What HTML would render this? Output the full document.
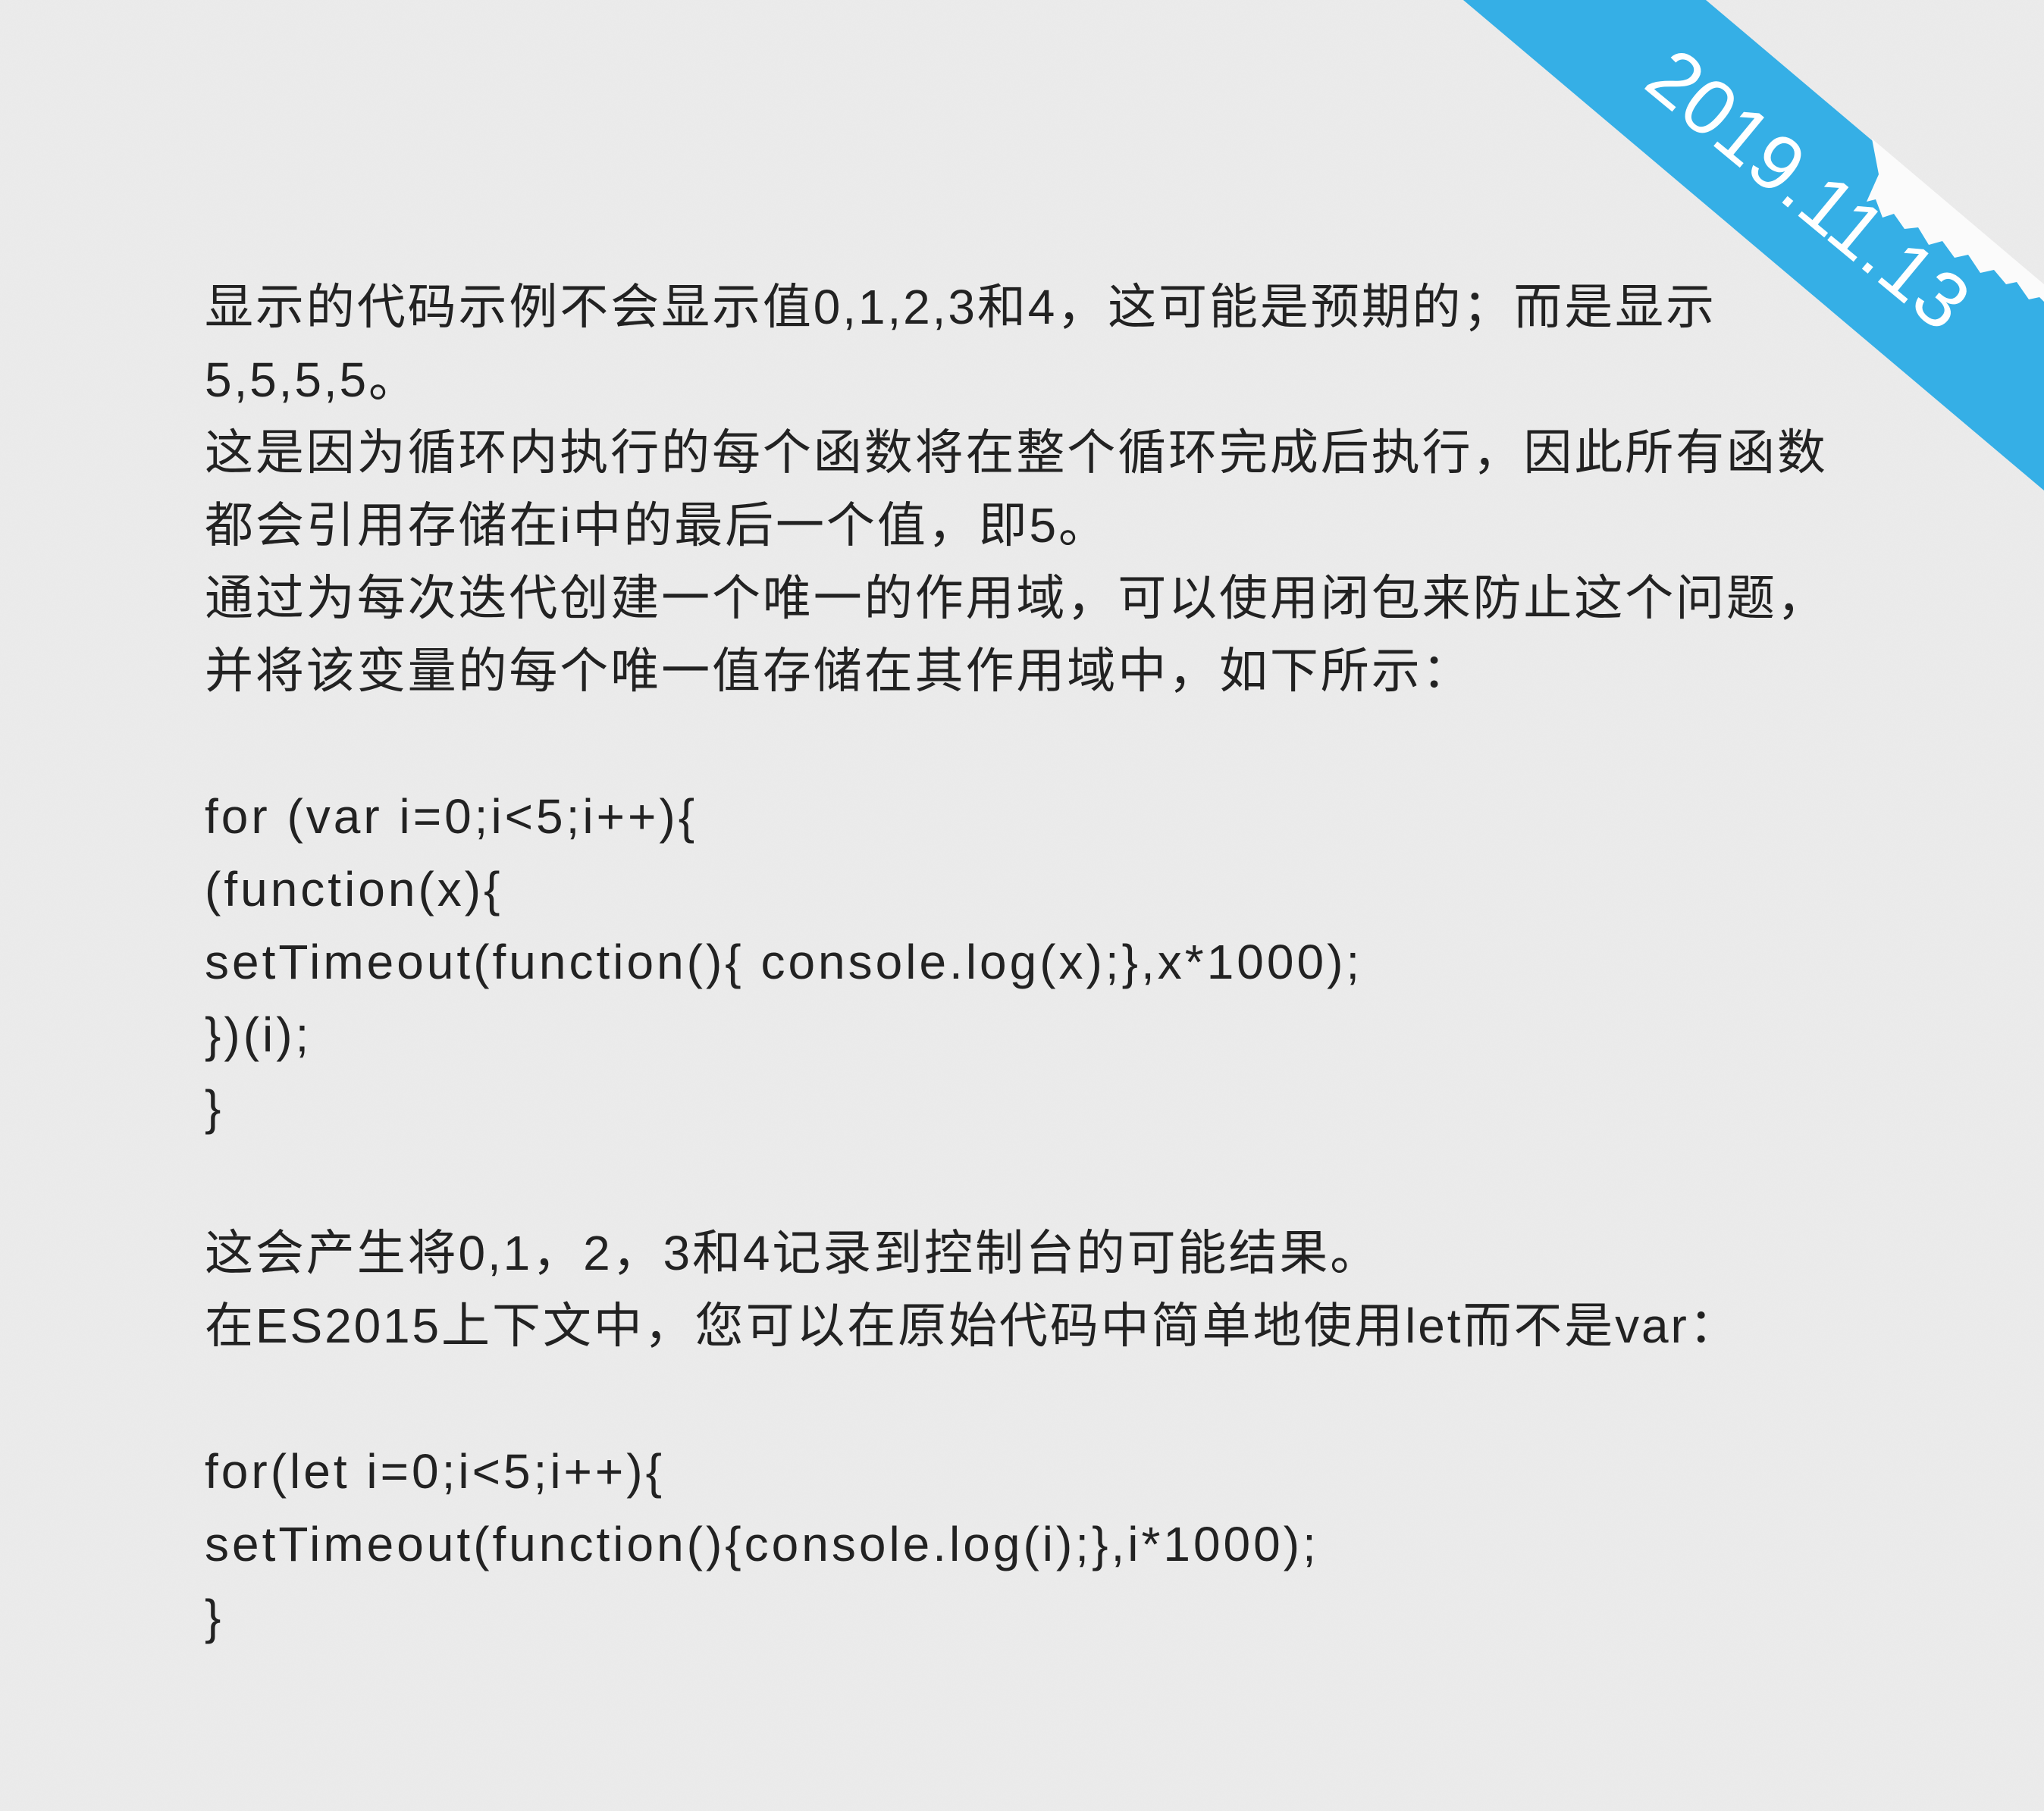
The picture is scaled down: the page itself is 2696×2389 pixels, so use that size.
<!DOCTYPE html>
<html><head><meta charset="utf-8"><style>
html,body{margin:0;padding:0;}
body{width:2696px;height:2389px;background:#ececec;position:relative;overflow:hidden;font-family:"Liberation Sans","Noto Sans CJK SC",sans-serif;color:#222;}
.t{position:absolute;left:270px;top:357px;font-size:64px;line-height:96px;white-space:pre;letter-spacing:2.9px;}
.c{letter-spacing:4px;}
svg{position:absolute;left:0;top:0;}
</style></head><body>
<svg width="2696" height="2389">
<defs><filter id="n"><feTurbulence type="fractalNoise" baseFrequency="0.9" numOctaves="2"/><feColorMatrix values="0 0 0 0 0.5 0 0 0 0 0.5 0 0 0 0 0.5 0 0 0 0.06 0"/></filter></defs>
<rect width="2696" height="2389" filter="url(#n)"/>
<polygon points="1930,0 2250,0 2696,377 2696,647" fill="#35afe6"/>
<polygon points="2469,183 2696,375 2696,398 2690,392 2676,395 2660,372 2646,375 2630,356 2612,360 2596,336 2578,340 2562,318 2544,323 2530,300 2512,302 2498,282 2483,287 2474,263 2462,266 2478,230" fill="#fbfbfb"/>
<text x="0" y="0" transform="translate(2380,256) rotate(39.6)" font-family="Liberation Sans, sans-serif" font-size="104" fill="#fff" text-anchor="middle" dominant-baseline="middle">2019.11.13</text>
</svg>
<div class="t">显示的代码示例不会显示值0,1,2,3和4，这可能是预期的；而是显示
5,5,5,5。
这是因为循环内执行的每个函数将在整个循环完成后执行，因此所有函数
都会引用存储在i中的最后一个值，即5。
通过为每次迭代创建一个唯一的作用域，可以使用闭包来防止这个问题，
并将该变量的每个唯一值存储在其作用域中，如下所示：

<span class="c">for (var i=0;i&lt;5;i++){
(function(x){
setTimeout(function(){ console.log(x);},x*1000);
})(i);
}</span>

这会产生将0,1，2，3和4记录到控制台的可能结果。
在ES2015上下文中，您可以在原始代码中简单地使用let而不是var：

<span class="c">for(let i=0;i&lt;5;i++){
setTimeout(function(){console.log(i);},i*1000);
}</span></div>
</body></html>
